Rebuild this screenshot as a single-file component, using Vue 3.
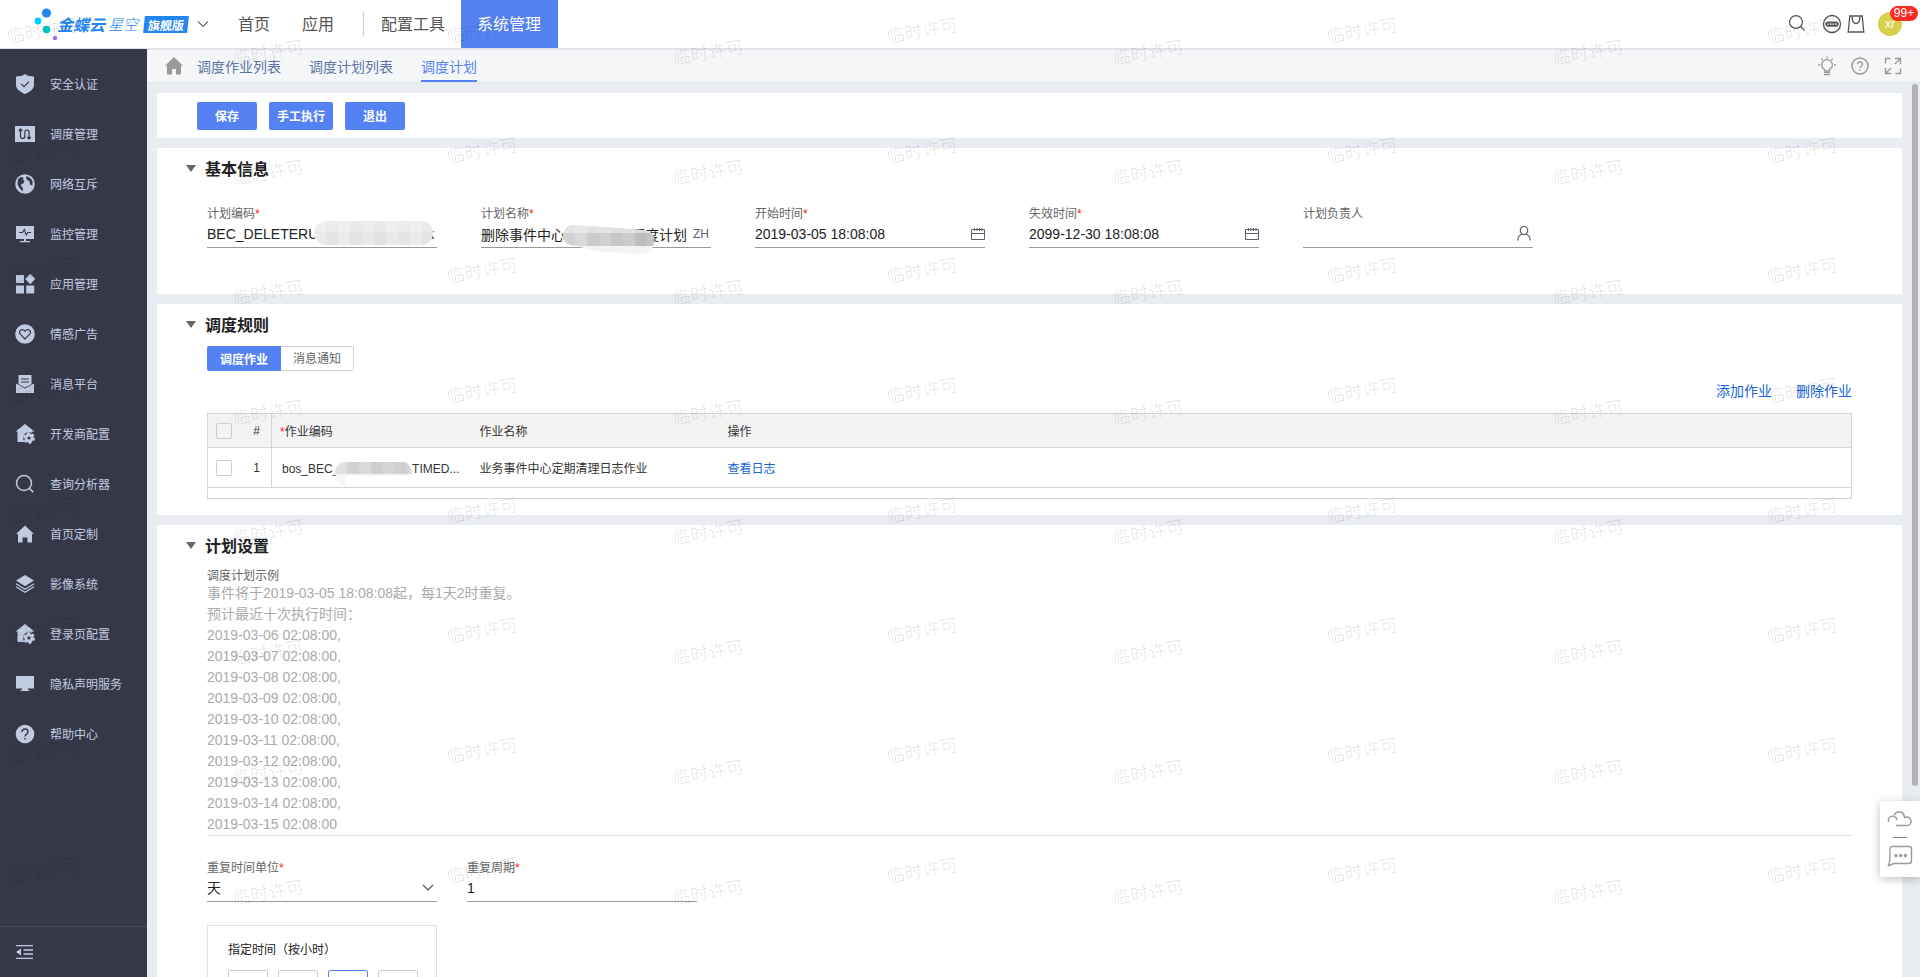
<script setup>
import { ref } from 'vue'

const menu = [
  { icon: 'shield', text: '安全认证' },
  { icon: 'schedule', text: '调度管理' },
  { icon: 'globe', text: '网络互斥' },
  { icon: 'monitor', text: '监控管理' },
  { icon: 'apps', text: '应用管理' },
  { icon: 'heart', text: '情感广告' },
  { icon: 'mail', text: '消息平台' },
  { icon: 'homegear', text: '开发商配置' },
  { icon: 'search', text: '查询分析器' },
  { icon: 'home', text: '首页定制' },
  { icon: 'layers', text: '影像系统' },
  { icon: 'homegear', text: '登录页配置' },
  { icon: 'screen', text: '隐私声明服务' },
  { icon: 'help', text: '帮助中心' }
]

const gap = (n) => '\u00a0'.repeat(n)
const planCode = ref('BEC_DELETERU' + gap(28) + 'k')
const planName = ref('删除事件中心' + gap(17) + '调度计划')
const startTime = ref('2019-03-05 18:08:08')
const endTime = ref('2099-12-30 18:08:08')
const owner = ref('')
const jobCode = 'bos_BEC_J' + gap(20) + 'TIMED...'
const cycle = ref('1')
const unit = ref('天')

const runTimes = Array.from({ length: 10 }, (_, i) =>
  `2019-03-${String(i + 6).padStart(2, '0')} 02:08:00${i < 9 ? ',' : ''}`
)
const maskA = ['#ebebeb', '#e4e4e4', '#ececec', '#e3e3e3', '#e8e8e8', '#e2e2e2', '#e9e9e9', '#e5e5e5', '#ebebeb', '#e4e4e4']
const maskB = ['#d2d2d2', '#dadada', '#cbcbcb', '#d0d0d0', '#c6c6c6', '#cccccc', '#bdbdbd', '#c4c4c4']
const maskC = ['#e0e0e0', '#d2d2d2', '#dadada', '#cfcfcf', '#d5d5d5', '#d0d0d0', '#d8d8d8']
</script>

<template>
  <div class="page">
    <header class="top">
      <div class="logo">
        <svg class="dots" width="32" height="40" viewBox="0 0 32 40">
          <circle cx="18.500" cy="9" r="4.600" fill="#2286ee" />
          <circle cx="10" cy="17" r="3.400" fill="#00cfff" />
          <circle cx="18.500" cy="25.500" r="3.800" fill="#00c5c5" />
          <circle cx="27" cy="34" r="2.200" fill="#9a6cff" />
        </svg>
        <span class="brand">金蝶云</span>
        <span class="sub">星空</span>
        <span class="edition"><i>旗舰版</i></span>
        <svg class="caret" width="12" height="8" viewBox="0 0 12 8"><path d="M1 1.500 6 6.500l5-5" fill="none" stroke="#666" stroke-width="1.100" /></svg>
      </div>
      <nav class="nav">
        <a href="#">首页</a>
        <a href="#">应用</a>
        <span class="bar"></span>
        <a href="#">配置工具</a>
        <a href="#" class="on">系统管理</a>
      </nav>
      <div class="tools">
        <button aria-label="搜索" class="t-search"><svg width="18" height="18" viewBox="0 0 18 18" fill="none" stroke="#555" stroke-width="1.200"><circle cx="8" cy="7" r="6.400" /><path d="m12.500 11.500 4 4" /></svg></button>
        <button aria-label="助手"><svg width="20" height="20" viewBox="0 0 20 20" fill="none" stroke="#555" stroke-width="1.300"><circle cx="10" cy="10" r="8.500" /><rect x="4" y="8.200" width="12" height="3.800" rx="1.900" fill="#555" /><path d="M5.500 10.100h9" stroke="#fff" stroke-dasharray="1.500 1" /></svg></button>
        <button aria-label="商城" class="t-bag"><svg width="18" height="20" viewBox="0 0 18 20" fill="none" stroke="#555" stroke-width="1.300"><path d="M2.800 2h12.400l1.600 16H1.200z" /><path d="M5 2c0 4.500 1.500 7.500 4 7.500S13 6.500 13 2" /></svg></button>
        <button class="avatar">xr<span class="badge">99+</span></button>
      </div>
    </header>

    <div class="body">
      <aside class="side">
        <a v-for="m in menu" :key="m.text" href="#" class="item">
          <svg width="20" height="20" viewBox="0 0 20 20" fill="#c0cae0">
            <template v-if="m.icon === 'shield'">
              <path d="M10 0c2.500 1.800 5.500 2.400 9 2.500v8.500c0 4-4 7-9 9-5-2-9-5-9-9V2.500C4.500 2.400 7.500 1.800 10 0z" />
              <path d="m6.200 9.800 2.800 2.800 5-5" fill="none" stroke="#363848" stroke-width="1.100" />
            </template>
            <template v-else-if="m.icon === 'schedule'">
              <rect y="2" width="20" height="16" />
              <path d="M5.500 5v7.500c0 2.600 4.300 2.600 4.300 0V8c0-2.600 4.300-2.600 4.300 0v7M3.800 7l1.700-2 1.700 2M12.400 13l1.700 2 1.700-2" fill="none" stroke="#363848" stroke-width="1.200" />
            </template>
            <template v-else-if="m.icon === 'globe'">
              <circle cx="10" cy="10" r="9.800" />
              <path d="M3 5.500 5.500 3l3 .4-.5 2.300 1.600 1.200-1.200 2.600-2.400.4.300 2.500 1.800 1.600-.7 3.400L4.600 14 2.500 10.500z M11 2.200c3 .4 5.600 2.300 6.600 5.300l-.2 4-2.200-.8-.8-3.500-2.700-1.400z" fill="#363848" />
            </template>
            <template v-else-if="m.icon === 'monitor'">
              <path d="M1 2h18v13H1zM9 15h2v2h4v1.200H5V17h4z" />
              <path d="M4 8.500h3.500l1.800-3 2 5.500 1.500-2.500H16" fill="none" stroke="#363848" stroke-width="1.100" />
            </template>
            <template v-else-if="m.icon === 'apps'">
              <path d="M1 1h8v8H1zM1 11.500h8v8H1zM11.200 11.500h8v8h-8zM15.200-.2l5 5.200-5 5.200-5-5.200z" />
            </template>
            <template v-else-if="m.icon === 'heart'">
              <circle cx="10" cy="10" r="9.800" />
              <path d="M10 15 5.300 10.200C2.700 7.500 6.700 3.300 10 7.200c3.300-3.900 7.300.3 4.700 3z" fill="none" stroke="#363848" stroke-width="1.200" />
            </template>
            <template v-else-if="m.icon === 'mail'">
              <path d="M3.500 1h13v9.200L10 13.500l-6.500-3.300zM1 9.500l9 5 9-5V19H1z" />
              <path d="M6 5h8M6 8h8" stroke="#363848" stroke-width="1.200" />
            </template>
            <template v-else-if="m.icon === 'homegear'">
              <path d="M10 0 19.500 7.500H17V18H2.500V7.500H.500z" />
              <circle cx="14" cy="14" r="5.900" fill="#363848" />
              <circle cx="14" cy="14" r="4.700" />
              <circle cx="14" cy="14" r="5" fill="none" stroke="#c0cae0" stroke-width="2" stroke-dasharray="2.620 2.620" />
              <circle cx="14" cy="14" r="1.600" fill="#363848" />
            </template>
            <template v-else-if="m.icon === 'search'">
              <circle cx="9" cy="9" r="7.500" fill="none" stroke="#c0cae0" stroke-width="1.500" />
              <path d="m14 14 4.200 4.200" stroke="#c0cae0" stroke-width="1.700" />
            </template>
            <template v-else-if="m.icon === 'home'">
              <path d="M10 1.500 19 10h-2v8.500h-4.500v-5h-5v5H3V10H1z" />
            </template>
            <template v-else-if="m.icon === 'layers'">
              <path d="m10 1 9 5.500-9 5.800-9-5.800z" />
              <path d="m1 9.800 9 5.500 9-5.500M1 12.800l9 5.500 9-5.500" fill="none" stroke="#c0cae0" stroke-width="1.300" />
            </template>
            <template v-else-if="m.icon === 'screen'">
              <path d="M1 2h18v12.500h-6V16h1.500v1h-9v-1H7v-1.500H1z" />
            </template>
            <template v-else>
              <circle cx="10" cy="10" r="9.300" />
              <path d="M7 8c0-4 6-4 6 0 0 2-3 2.200-3 4.500M10 14v1.500" fill="none" stroke="#363848" stroke-width="1.400" />
            </template>
          </svg>
          <span>{{ m.text }}</span>
        </a>
        <button class="fold" aria-label="收起菜单">
          <svg width="17" height="14" viewBox="0 0 17 14" fill="none" stroke="#c0cae0" stroke-width="1.300"><path d="M0 .700h17M7.500 5H17M7.500 9H17M0 13.300h17" /><path d="M0 7l5-3.500v7z" fill="#c0cae0" stroke="none" /></svg>
        </button>
      </aside>

      <main class="main">
        <div class="tabs">
          <a href="#" class="home" aria-label="主页"><svg width="18" height="18" viewBox="0 0 18 18" fill="#999"><path d="M9 0 18 8.800h-2V17.500h-5V12H7v5.500H2V8.800H0z" /></svg></a>
          <a href="#" class="tab">调度作业列表</a>
          <a href="#" class="tab">调度计划列表</a>
          <a href="#" class="tab cur">调度计划</a>
          <div class="tabtools">
            <button aria-label="提示"><svg width="18" height="20" viewBox="0 0 18 20" fill="none" stroke="#999" stroke-width="1.300"><path d="M6.500 15v-1.700C4.700 12.400 3.600 10.900 3.600 9a5.400 5.400 0 0 1 10.800 0c0 1.900-1.100 3.400-2.900 4.300V15zM6 16.700h6M6 18.700h6M9 .5v2M3.200 2.700l1.300 1.300M14.800 2.700l-1.300 1.300M0 9h2M16 9h2" /></svg></button>
            <button aria-label="帮助"><svg width="18" height="18" viewBox="0 0 18 18" fill="none" stroke="#999" stroke-width="1.400"><circle cx="9" cy="9" r="8" /><path d="M6.600 7.300c0-3.400 4.900-3.200 4.900 0C11.500 9 9 9 9 11M9 12.200v1.600" /></svg></button>
            <button aria-label="全屏"><svg width="18" height="18" viewBox="0 0 18 18" fill="none" stroke="#999" stroke-width="1.400"><path d="M1.500 6.500v-5h5M16.500 11.500v5h-5M11 1.500h5.500V7M16.500 1.500 11 7M1.500 11v5.500H7M1.500 16.500 7 11" /></svg></button>
          </div>
        </div>

        <div class="scroll">
          <section class="card acts">
            <button class="btn">保存</button>
            <button class="btn">手工执行</button>
            <button class="btn">退出</button>
          </section>

          <section class="card basic">
            <h2>基本信息</h2>
            <div class="fields">
              <div class="field">
                <label for="f1">计划编码<em>*</em></label>
                <div class="ctl"><input id="f1" v-model="planCode"></div>
                <svg class="mask ma" width="120" height="24" viewBox="0 0 120 24">
                  <clipPath id="ca"><rect width="119" height="24" rx="12" /></clipPath>
                  <g clip-path="url(#ca)"><rect v-for="(c, i) in maskA" :key="i" :x="i * 12" width="12" height="24" :fill="c" /><rect width="119" height="11" fill="#f4f4f4" opacity=".4" /></g>
                </svg>
              </div>
              <div class="field">
                <label for="f2">计划名称<em>*</em></label>
                <div class="ctl"><input id="f2" v-model="planName"><span class="lang">ZH</span></div>
                <svg class="mask mb" width="92" height="30" viewBox="0 0 92 30">
                  <clipPath id="cb"><path d="M10 0 80 5Q92 6 91 17 90 29 78 29L38 27 8 20Q0 18 0 11 1 1 10 0z" /></clipPath>
                  <g clip-path="url(#cb)"><rect width="92" height="30" fill="#f3f3f3" /><rect v-for="(c, i) in maskB" :key="i" :x="i * 12" width="12" height="21" :fill="c" /><rect width="92" height="8" fill="#f4f4f4" opacity=".55" /></g>
                </svg>
              </div>
              <div class="field">
                <label for="f3">开始时间<em>*</em></label>
                <div class="ctl"><input id="f3" v-model="startTime"><svg width="14" height="12" viewBox="0 0 14 12" fill="none" stroke="#5a6070"><path d="M.500 1.500h13v10H.500zM.500 5.500h13M3.500 0v3M6 0v3M8.500 0v3M11 0v3" /></svg></div>
              </div>
              <div class="field">
                <label for="f4">失效时间<em>*</em></label>
                <div class="ctl"><input id="f4" v-model="endTime"><svg width="14" height="12" viewBox="0 0 14 12" fill="none" stroke="#5a6070"><path d="M.500 1.500h13v10H.500zM.500 5.500h13M3.500 0v3M6 0v3M8.500 0v3M11 0v3" /></svg></div>
              </div>
              <div class="field">
                <label for="f5">计划负责人</label>
                <div class="ctl person"><input id="f5" v-model="owner"><svg width="14" height="15" viewBox="0 0 14 15" fill="none" stroke="#5a6070" stroke-width="1.200"><ellipse cx="7" cy="4.500" rx="3.700" ry="4" /><path d="M.800 14.500c0-3.500 1.700-5.500 4.200-6.500M13.200 14.500c0-3.500-1.700-5.500-4.200-6.500" /></svg></div>
              </div>
            </div>
          </section>

          <section class="card rules">
            <h2>调度规则</h2>
            <div class="seg">
              <button class="sel">调度作业</button><button>消息通知</button>
            </div>
            <div class="links"><a href="#">添加作业</a><a href="#">删除作业</a></div>
            <table>
              <colgroup><col class="c1"><col class="c2"><col class="c3"><col class="c4"><col></colgroup>
              <thead>
                <tr><th class="ck"><input type="checkbox" aria-label="全选"></th><th class="no">#</th><th class="code"><em>*</em>作业编码</th><th>作业名称</th><th>操作</th></tr>
              </thead>
              <tbody>
                <tr>
                  <td class="ck"><input type="checkbox" aria-label="选择第1行"></td><td class="no">1</td>
                  <td class="code"><div class="cell">{{ jobCode }}
                    <svg class="mask mc" width="78" height="24" viewBox="0 0 78 24">
                      <clipPath id="cc"><path d="M10 0H70Q76 2 77 12H74V14H10V24Q0 22 0 10 1 1 10 0z" /></clipPath>
                      <g clip-path="url(#cc)"><rect width="78" height="24" fill="#f5f5f5" /><rect v-for="(c, i) in maskC" :key="i" :x="i * 12" width="12" height="12" :fill="c" /></g>
                    </svg></div></td>
                  <td>业务事件中心定期清理日志作业</td><td><a href="#">查看日志</a></td>
                </tr>
                <tr class="foot"><td colspan="5"></td></tr>
              </tbody>
            </table>
          </section>

          <section class="card plan">
            <h2>计划设置</h2>
            <div class="demo">
              <p class="cap">调度计划示例</p>
              <p>事件将于2019-03-05 18:08:08起，每1天2时重复。</p>
              <p>预计最近十次执行时间：</p>
              <p v-for="t in runTimes" :key="t">{{ t }}</p>
            </div>
            <div class="repeat">
              <div class="field">
                <label for="f6">重复时间单位<em>*</em></label>
                <div class="ctl"><select id="f6" v-model="unit"><option>天</option></select><svg class="dd" width="12" height="8" viewBox="0 0 12 8"><path d="M1 1l5 5 5-5" fill="none" stroke="#555" stroke-width="1.200" /></svg></div>
              </div>
              <div class="field">
                <label for="f7">重复周期<em>*</em></label>
                <div class="ctl"><input id="f7" v-model="cycle"></div>
              </div>
            </div>
            <div class="hours">
              <p>指定时间（按小时）</p>
              <div class="cells"><button v-for="n in 4" :key="n" :class="{ pick: n === 3 }" :aria-label="`${n - 1}时`"></button></div>
            </div>
          </section>
          <div class="thumb"></div>
        </div>
      </main>
    </div>

    <div class="float">
      <button aria-label="云服务"><svg width="26" height="17" viewBox="0 0 26 17" fill="none" stroke="#999" stroke-width="1.400"><path d="M1.500 11C.500 6 5.500 3.500 9 6.500l1 2.500M7 4.500C9-.5 17-.5 17.500 6.500c4-1.500 7 1 6.500 4.500-.3 2.500-2 3.500-4 3.500H9" /></svg></button>
      <span class="sep"></span>
      <button aria-label="消息"><svg width="26" height="22" viewBox="0 0 26 22" fill="none" stroke="#999" stroke-width="1.400"><path d="M5 1.500h17q2.500 0 2.500 2.500v12q0 2.500-2.500 2.500H7L1.500 20.500Q3 16 3 11V4q0-2.500 2-2.500z" /><g fill="#999" stroke="none"><circle cx="9" cy="10.500" r="1.700" /><circle cx="13.700" cy="10.500" r="1.700" /><circle cx="18.400" cy="10.500" r="1.700" /></g></svg></button>
    </div>

    <div class="marks" aria-hidden="true">
      <div v-for="n in 40" :key="n" class="tile"><span class="a">临时许可</span><span v-if="n % 5" class="b">临时许可</span></div>
    </div>
  </div>
</template>

<style>
body { margin: 0; }
</style>

<style scoped>
* { box-sizing: border-box; }
.page { position: relative; display: flex; flex-direction: column; height: 100vh; overflow: hidden; background: #e9ecf1; font: 12px/16px "Liberation Sans", "Noto Sans CJK SC", sans-serif; color: #333; }
a { text-decoration: none; color: inherit; }
button, input, select { font: inherit; color: inherit; border: 0; padding: 0; margin: 0; background: none; border-radius: 0; outline: 0; }
button svg { display: block; }
h2, p { margin: 0; }
em { font-style: normal; color: #fb2323; }

.top { display: flex; flex: none; height: 49px; background: #fff; border-bottom: 1px solid #dfe2ec; }
.logo { display: flex; align-items: center; flex: none; width: 222px; padding-left: 28px; white-space: nowrap; color: #2286ee; }
.dots { flex: none; margin-right: -3px; }
.brand { font: italic bold 16px/20px "Noto Sans CJK SC", sans-serif; margin-right: 3px; }
.sub { font: italic 300 15px/20px "Noto Sans CJK SC", sans-serif; margin-right: 6px; }
.edition { width: 44px; height: 17px; background: #2286ee; color: #fff; transform: skewX(-6deg); text-align: center; font: bold 12px/17px "Noto Sans CJK SC", sans-serif; }
.edition i { font-style: normal; }
.caret { margin-left: 9px; }
.nav { display: flex; font-size: 16px; line-height: 50px; color: #555; }
.nav a { height: 48px; padding: 0 16px; }
.nav .on { padding-right: 17px; background: #5582f3; color: #fff; }
.bar { width: 1px; height: 24px; margin: 12px 1px 0 13px; background: #ccc; }
.tools { display: flex; align-items: center; margin-left: auto; padding-right: 18px; }
.t-search { margin-right: 16px; }
.t-bag { margin: 0 13px 0 5px; }
.avatar { position: relative; width: 24px; height: 24px; border-radius: 12px; background: #d8cf4b; color: #fff; line-height: 24px; text-align: center; }
.badge { position: absolute; left: 12px; top: -6px; width: 28px; height: 15px; border-radius: 8px; background: #ff2a25; line-height: 15px; }

.body { display: flex; flex: 1; min-height: 0; }
.side { display: flex; flex-direction: column; flex: none; width: 147px; padding-top: 10px; background: #363848; color: #c3cce0; }
.item { display: flex; align-items: center; gap: 15px; height: 50px; padding-left: 15px; flex: none; }
.item span { padding-top: 2px; }
.fold { display: flex; align-items: center; height: 51px; margin-top: auto; padding-left: 16px; border-top: 1px solid #484b5c; }

.main { display: flex; flex-direction: column; flex: 1; min-width: 0; }
.tabs { display: flex; align-items: center; flex: none; height: 34px; padding: 0 18px; background: #f5f6f8; border: solid #e0e2e6; border-width: 1px 0; font-size: 14px; color: #5b74a4; }
.home { height: 18px; margin-right: 14px; }
.tab { height: 32px; line-height: 34px; margin-right: 28px; }
.cur { color: #5582f3; border-bottom: 2px solid #5582f3; }
.tabtools { display: flex; align-items: center; gap: 15px; margin-left: auto; }

.scroll { position: relative; display: flex; flex-direction: column; gap: 10px; flex: 1; min-height: 0; overflow: hidden; padding: 10px 18px 0 10px; }
.card { flex: none; background: #fff; padding: 0 50px; }
.thumb { position: absolute; right: 2px; top: 1px; width: 6px; height: calc(100% - 192px); border-radius: 3px; background: #b2b2b2; }
.acts { display: flex; gap: 12px; padding: 9px 40px 8px; }
.btn { min-width: 60px; height: 28px; padding: 2px 8px 0; border-radius: 2px; background: #5582f3; color: #fff; font-weight: bold; }
h2 { position: relative; margin-left: -2px; padding-top: 2px; font-size: 16px; line-height: 40px; font-weight: bold; color: #222; }
h2::before { content: ""; position: absolute; left: -19px; top: 17px; border: solid transparent; border-width: 7px 5px 0; border-top-color: #666; }

.basic { padding-bottom: 46px; }
.fields { display: flex; gap: 44px; padding-top: 15px; }
.field { position: relative; width: 230px; }
.field label { display: block; height: 17px; line-height: 18px; color: #666; }
.ctl { display: flex; align-items: center; height: 26px; padding-bottom: 2px; border-bottom: 1px solid #999; font-size: 14px; color: #222; }
.ctl input { flex: 1; min-width: 0; height: 22px; }
.ctl svg { flex: none; }
.person { padding-right: 2px; }
.lang { font-size: 12px; color: #5a6070; padding: 0 2px 0 3px; }
.mask { position: absolute; z-index: 1; }
.ma { left: 107px; top: 16px; }
.mb { left: 82px; top: 20px; }
.mc { left: 55px; top: 1px; }

.rules { padding-bottom: 16px; }
.seg { display: flex; }
.seg button { width: 73px; height: 25px; padding-top: 1px; border: 1px solid #d5d5d5; border-left: 0; border-radius: 0 2px 2px 0; color: #666; }
.seg .sel { width: 74px; padding-top: 2px; border: 0; border-radius: 2px 0 0 2px; background: #5582f3; color: #fff; font-weight: bold; }
.links { display: flex; justify-content: flex-end; gap: 24px; margin: 10px 0 12px; font-size: 14px; line-height: 20px; }
.links a, td a { color: #1664d9; }
table { width: 100%; table-layout: fixed; border-collapse: collapse; border: 1px solid #d5d5d5; }
.c1 { width: 33px; }
.c2 { width: 31px; }
.c3 { width: 200px; }
.c4 { width: 248px; }
tr { border-bottom: 1px solid #d5d5d5; height: 40px; }
thead tr { height: 34px; background: #f3f3f3; }
tr.foot { height: 11px; }
th, td { padding: 2px 0 0 8px; text-align: left; font-weight: normal; }
.ck { padding-top: 0; }
.no { padding: 1px 11px 0 0; text-align: right; border-right: 1px solid #d5d5d5; }
.cell { position: relative; padding-left: 2px; height: 16px; white-space: nowrap; }
.foot td { padding: 0; }
input[type="checkbox"] { display: block; appearance: none; width: 16px; height: 16px; border: 1px solid #ccc; border-radius: 2px; background: #fff; }
thead input[type="checkbox"] { background: #f3f3f3; }

.plan { min-height: 460px; }
.demo { border-bottom: 1px solid #e0e0e0; font-size: 14px; line-height: 21px; color: #aaa; }
.demo .cap { height: 16px; font-size: 12px; line-height: 18px; color: #666; }
.repeat { display: flex; gap: 30px; margin: 23px 0; }
.repeat .ctl { position: relative; }
select { flex: 1; height: 22px; appearance: none; }
.dd { position: absolute; right: 3px; pointer-events: none; }
.hours { width: 230px; padding: 16px 20px; border: 1px solid #e0e0e0; color: #222; }
.cells { display: flex; gap: 10px; margin-top: 12px; }
.cells button { width: 40px; height: 28px; flex: none; border: 1px solid #ccc; border-radius: 2px; }
.cells .pick { border-color: #5582f3; }

.float { position: absolute; right: 0; bottom: 100px; width: 40px; height: 76px; padding-top: 10px; display: flex; flex-direction: column; align-items: center; background: #fff; border-radius: 3px 0 0 3px; box-shadow: 0 2px 10px rgba(0, 0, 0, .25); }
.sep { width: 14px; height: 1px; margin: 9px 0 7px; background: #888; }

.marks { position: absolute; inset: 0; overflow: hidden; pointer-events: none; display: grid; grid-template-columns: repeat(5, 440px); grid-auto-rows: 120px; font: 300 18px/20px "Noto Sans CJK SC", sans-serif; color: rgba(0, 0, 0, .13); }
.tile { position: relative; }
.tile span { position: absolute; width: 72px; transform: rotate(-10deg); }
.a { left: 6px; top: 19px; }
.b { left: 232px; top: 41px; }
</style>
